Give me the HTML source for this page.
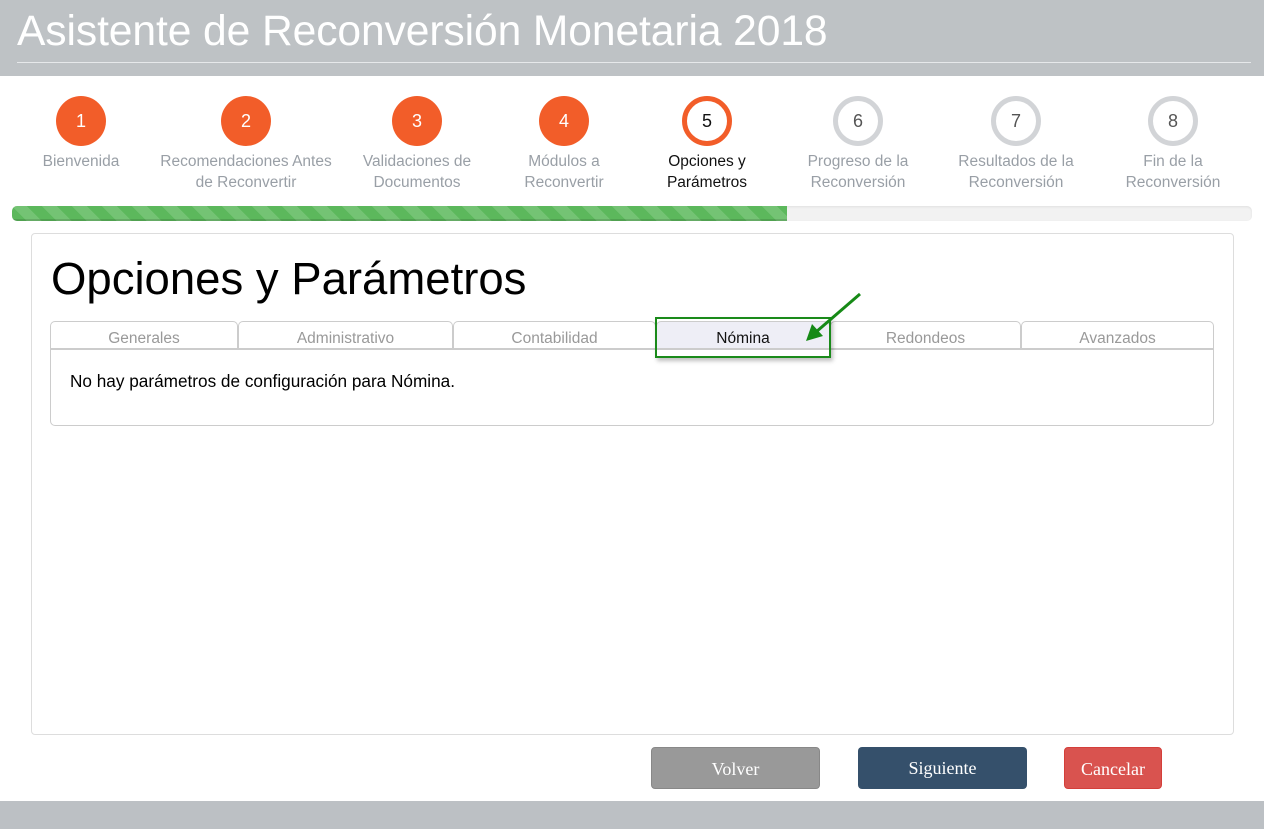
<!DOCTYPE html>
<html><head><meta charset="utf-8"><style>
*{box-sizing:border-box;margin:0;padding:0}
body{width:1264px;height:829px;position:relative;background:#fff;font-family:"Liberation Sans",Arial,sans-serif;overflow:hidden}
.hdr{position:absolute;left:0;top:0;width:1264px;height:76px;background:#bec2c5}
.hdr h1{position:absolute;left:17px;top:7px;font-weight:normal;color:#fff;font-size:42.6px;letter-spacing:-0.1px;white-space:nowrap}
.hdr .ln{position:absolute;left:17px;top:62px;width:1234px;height:1px;background:#e6e8ea}
.st{position:absolute;top:96px;width:220px;margin-left:-110px;text-align:center}
.c{width:50px;height:50px;border-radius:50%;margin:0 auto;background:#f25d29;color:#fff;font-size:18px;line-height:50px}
.c.cur{background:#fff;border:5px solid #f25d29;color:#111;line-height:40px}
.c.fut{background:#fff;border:5px solid #d2d4d7;color:#555;line-height:40px}
.lb{margin-top:5px;font-size:15.5px;line-height:21px;color:#999fa6}
.lb.cur{color:#111}
.bar{position:absolute;left:12px;top:206px;width:1240px;height:15px;border-radius:5px;background:#f2f2f2;box-shadow:inset 0 1px 2px rgba(0,0,0,.08);overflow:hidden}
.bar .f{width:775px;height:15px;background-color:#5cb85c;background-image:linear-gradient(45deg,rgba(255,255,255,.15) 25%,transparent 25%,transparent 50%,rgba(255,255,255,.15) 50%,rgba(255,255,255,.15) 75%,transparent 75%,transparent);background-size:30px 30px;box-shadow:inset 0 -2px 0 rgba(0,0,0,.12)}
.card{position:absolute;left:31px;top:233px;width:1203px;height:502px;border:1px solid #ddd;border-radius:4px}
.card h2{position:absolute;left:19px;top:19px;font-weight:normal;font-size:45.5px;color:#000;white-space:nowrap}
.tab{position:absolute;top:321px;height:29px;border:1px solid #ccc;border-bottom:none;border-radius:5px 5px 0 0;text-align:center;font-size:15.5px;color:#999;line-height:33px;background:#fff}
.pane{position:absolute;left:50px;top:348px;width:1164px;height:78px;border:1px solid #ccc;border-top:2px solid #ccc;border-radius:0 0 5px 5px;font-size:17.2px;color:#000;padding:21px 0 0 19px;white-space:nowrap}
.btn{position:absolute;top:747px;height:42px;border-radius:4px;color:#fff;font-family:"Liberation Serif",serif;font-size:18px;line-height:42px;text-align:center}
.ftr{position:absolute;left:0;top:801px;width:1264px;height:28px;background:#bcc0c4}
</style></head><body>
<div class="hdr"><h1>Asistente de Reconversión Monetaria 2018</h1><div class="ln"></div></div>

<div class="st" style="left:81px"><div class="c">1</div><div class="lb">Bienvenida</div></div>
<div class="st" style="left:246px"><div class="c">2</div><div class="lb">Recomendaciones Antes<br>de Reconvertir</div></div>
<div class="st" style="left:417px"><div class="c">3</div><div class="lb">Validaciones de<br>Documentos</div></div>
<div class="st" style="left:564px"><div class="c">4</div><div class="lb">Módulos a<br>Reconvertir</div></div>
<div class="st" style="left:707px"><div class="c cur">5</div><div class="lb cur">Opciones y<br>Parámetros</div></div>
<div class="st" style="left:858px"><div class="c fut">6</div><div class="lb">Progreso de la<br>Reconversión</div></div>
<div class="st" style="left:1016px"><div class="c fut">7</div><div class="lb">Resultados de la<br>Reconversión</div></div>
<div class="st" style="left:1173px"><div class="c fut">8</div><div class="lb">Fin de la<br>Reconversión</div></div>

<div class="bar"><div class="f"></div></div>

<div class="card"><h2>Opciones y Parámetros</h2></div>

<div class="tab" style="left:50px;width:188px">Generales</div>
<div class="tab" style="left:238px;width:215px">Administrativo</div>
<div class="tab" style="left:453px;width:203px">Contabilidad</div>
<div class="tab" style="left:656px;width:174px;background:#eeeef6;color:#111">Nómina</div>
<div class="tab" style="left:830px;width:191px">Redondeos</div>
<div class="tab" style="left:1021px;width:193px">Avanzados</div>
<div class="pane">No hay parámetros de configuración para Nómina.</div>

<div style="position:absolute;left:655px;top:317px;width:176px;height:41px;border:2px solid #1a8a1a;box-shadow:2px 3px 4px rgba(0,0,0,.25)"></div>
<svg style="position:absolute;left:0;top:0" width="1264" height="829">
<line x1="860" y1="294" x2="816" y2="332" stroke="#168a16" stroke-width="3"/>
<polygon points="806,341 812,324 823,336" fill="#168a16"/>
</svg>

<div class="btn" style="left:651px;width:169px;background:#999;border:1px solid #888">Volver</div>
<div class="btn" style="left:858px;width:169px;background:#35506b">Siguiente</div>
<div class="btn" style="left:1064px;width:98px;background:#d9534f;border:1px solid #d43f3a">Cancelar</div>
<div class="ftr"></div>
</body></html>
